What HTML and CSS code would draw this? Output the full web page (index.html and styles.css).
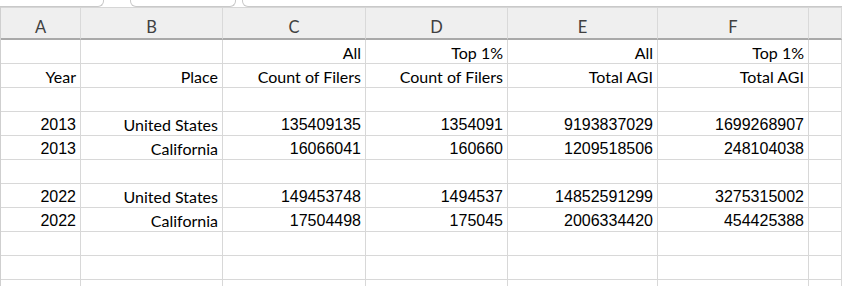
FILE: index.html
```html
<!DOCTYPE html>
<html>
  <head>
    <meta charset="UTF-8">
    <title>Sheet</title>
    <link rel="stylesheet" href="styles.css">
  </head>
  <body>
    <div class="tabs">
      <div class="tab tab-first"></div>
      <div class="tab tab-mid"></div>
      <div class="tab tab-last"></div>
    </div>

    <div class="sheet">
      <div class="row head">
        <div class="cell">A</div>
        <div class="cell">B</div>
        <div class="cell">C</div>
        <div class="cell">D</div>
        <div class="cell">E</div>
        <div class="cell">F</div>
        <div class="cell"></div>
      </div>

      <div class="row">
        <div class="cell"></div>
        <div class="cell"></div>
        <div class="cell">All</div>
        <div class="cell">Top 1%</div>
        <div class="cell">All</div>
        <div class="cell">Top 1%</div>
        <div class="cell"></div>
      </div>
      <div class="row">
        <div class="cell">Year</div>
        <div class="cell">Place</div>
        <div class="cell">Count of Filers</div>
        <div class="cell">Count of Filers</div>
        <div class="cell">Total AGI</div>
        <div class="cell">Total AGI</div>
        <div class="cell"></div>
      </div>
      <div class="row">
        <div class="cell"></div><div class="cell"></div><div class="cell"></div><div class="cell"></div>
        <div class="cell"></div><div class="cell"></div><div class="cell"></div>
      </div>
      <div class="row">
        <div class="cell num">2013</div>
        <div class="cell">United States</div>
        <div class="cell num">135409135</div>
        <div class="cell num">1354091</div>
        <div class="cell num">9193837029</div>
        <div class="cell num">1699268907</div>
        <div class="cell"></div>
      </div>
      <div class="row">
        <div class="cell num">2013</div>
        <div class="cell">California</div>
        <div class="cell num">16066041</div>
        <div class="cell num">160660</div>
        <div class="cell num">1209518506</div>
        <div class="cell num">248104038</div>
        <div class="cell"></div>
      </div>
      <div class="row">
        <div class="cell"></div><div class="cell"></div><div class="cell"></div><div class="cell"></div>
        <div class="cell"></div><div class="cell"></div><div class="cell"></div>
      </div>
      <div class="row">
        <div class="cell num">2022</div>
        <div class="cell">United States</div>
        <div class="cell num">149453748</div>
        <div class="cell num">1494537</div>
        <div class="cell num">14852591299</div>
        <div class="cell num">3275315002</div>
        <div class="cell"></div>
      </div>
      <div class="row">
        <div class="cell num">2022</div>
        <div class="cell">California</div>
        <div class="cell num">17504498</div>
        <div class="cell num">175045</div>
        <div class="cell num">2006334420</div>
        <div class="cell num">454425388</div>
        <div class="cell"></div>
      </div>
      <div class="row">
        <div class="cell"></div><div class="cell"></div><div class="cell"></div><div class="cell"></div>
        <div class="cell"></div><div class="cell"></div><div class="cell"></div>
      </div>
      <div class="row">
        <div class="cell"></div><div class="cell"></div><div class="cell"></div><div class="cell"></div>
        <div class="cell"></div><div class="cell"></div><div class="cell"></div>
      </div>
      <div class="row">
        <div class="cell"></div><div class="cell"></div><div class="cell"></div><div class="cell"></div>
        <div class="cell"></div><div class="cell"></div><div class="cell"></div>
      </div>
    </div>
  </body>
</html>
```

FILE: styles.css
```css
body {
  margin: 0;
  padding: 0;
  background-color: #fff;
  font-family: 'Lato', sans-serif;
  overflow: hidden;
}

/* tira das abas no topo, quase toda cortada */
.tabs {
  height: 7px;
  display: flex;
  align-items: flex-end;
  overflow: hidden;
  background-color: #fff;
}
.tab {
  height: 16px;
  flex-shrink: 0;
  background-color: #fff;
  border: 1px solid #c9c9c9;
  border-top: none;
  border-radius: 0 0 6px 6px;
  box-sizing: border-box;
}
.tab-first {
  width: 114px;
  margin-left: -10px;
}
.tab-mid {
  width: 106px;
  margin-left: 26px;
}
.tab-last {
  width: 640px;
  margin-left: 6px;
}

.sheet {
  border-left: 1px solid #cfcfcf;
}
.row {
  display: grid;
  grid-template-columns: 80px 142px 143px 142px 150px 151px 1fr;
  height: 24px;
}
.cell {
  box-sizing: border-box;
  border-right: 1px solid #d8d8d8;
  border-bottom: 1px solid #d8d8d8;
  padding: 2px 4px 0 0;
  text-align: right;
  font-size: 16px;
  line-height: 21px;
  color: #000;
  white-space: nowrap;
}
.num {
  font-family: 'Liberation Sans', Arial, sans-serif;
  font-size: 16px;
}

.head {
  height: 33px;
  background-color: #efefef;
  border-top: 1px solid #d6d6d6;
  box-sizing: border-box;
}
.head .cell {
  border-bottom: 2px solid #a9a9a9;
  border-right-color: #d9d9d9;
  text-align: center;
  padding: 9px 0 0 0;
  font-size: 16.5px;
  line-height: 20px;
  color: #404040;
}
```
